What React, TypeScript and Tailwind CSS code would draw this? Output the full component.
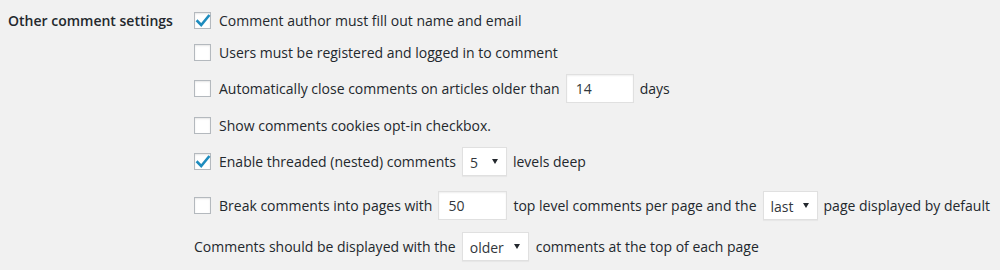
import React from "react";

const Check = ({ checked }: { checked?: boolean }) => (
  <span className="relative inline-block w-[17px] h-[17px] shrink-0 border border-[#b4b9be] bg-white shadow-[inset_0_1px_2px_rgba(0,0,0,0.1)]">
    {checked && (
      <svg viewBox="0 0 20 20" className="absolute left-[-2px] top-[-2px] w-[20px] h-[20px]">
        <path d="M4.5 10.2 L8.2 14 L15.6 5" fill="none" stroke="#1e8cbe" strokeWidth="2.6" strokeLinecap="square" strokeLinejoin="miter" />
      </svg>
    )}
  </span>
);

const Input = ({ value, w }: { value: string; w: string }) => (
  <span className={`inline-flex items-center h-[29px] ${w} pl-[9px] bg-white border border-[#e0e0e0] shadow-[inset_0_1px_2px_rgba(0,0,0,0.07)] text-[#32373c]`}>
    {value}
  </span>
);

const Select = ({ value, w }: { value: string; w: string }) => (
  <span className={`inline-flex items-center justify-between h-[29px] ${w} pl-[7px] pr-[8px] bg-white border border-[#e0e0e0] shadow-[0_1px_1px_rgba(0,0,0,0.04)] text-[#32373c]`}>
    <span className="pt-[2px]">{value}</span>
    <svg viewBox="0 0 6 5" className="w-[6px] h-[5px]">
      <path d="M0 0 L6 0 L3 5 Z" fill="#23282d" />
    </svg>
  </span>
);

export default function App() {
  return (
    <div
      className="w-[1000px] h-[270px] bg-[#f1f1f1] text-[#23282d] text-[14px] flex"
      style={{ fontFamily: '"Open Sans", sans-serif' }}
    >
      <div className="w-[194px] pl-[8px] pt-[10px] font-semibold text-[14px] leading-[22px] whitespace-nowrap">
        Other comment settings
      </div>
      <div className="flex flex-col pt-[4px] whitespace-nowrap">
        <div className="h-[32px] flex items-center gap-[8px]">
          <Check checked />
          <span>Comment author must fill out name and email</span>
        </div>
        <div className="h-[32px] flex items-center gap-[8px]">
          <Check />
          <span>Users must be registered and logged in to comment</span>
        </div>
        <div className="h-[40px] flex items-center">
          <Check />
          <span className="ml-[8px]">Automatically close comments on articles older than</span>
          <span className="ml-[6px]"><Input value="14" w="w-[68px]" /></span>
          <span className="ml-[6px]">days</span>
        </div>
        <div className="h-[34px] flex items-center gap-[8px]">
          <Check />
          <span>Show comments cookies opt-in checkbox.</span>
        </div>
        <div className="h-[38px] flex items-center">
          <Check checked />
          <span className="ml-[8px]">Enable threaded (nested) comments</span>
          <span className="ml-[6px]"><Select value="5" w="w-[45px]" /></span>
          <span className="ml-[6px]">levels deep</span>
        </div>
        <div className="h-[50px] flex items-center">
          <Check />
          <span className="ml-[8px]">Break comments into pages with</span>
          <span className="ml-[6px]"><Input value="50" w="w-[69px]" /></span>
          <span className="ml-[6px]">top level comments per page and the</span>
          <span className="ml-[6px]"><Select value="last" w="w-[55px]" /></span>
          <span className="ml-[6px]">page displayed by default</span>
        </div>
        <div className="h-[32px] flex items-center">
          <span>Comments should be displayed with the</span>
          <span className="ml-[6px]"><Select value="older" w="w-[67px]" /></span>
          <span className="ml-[7px]">comments at the top of each page</span>
        </div>
      </div>
    </div>
  );
}
